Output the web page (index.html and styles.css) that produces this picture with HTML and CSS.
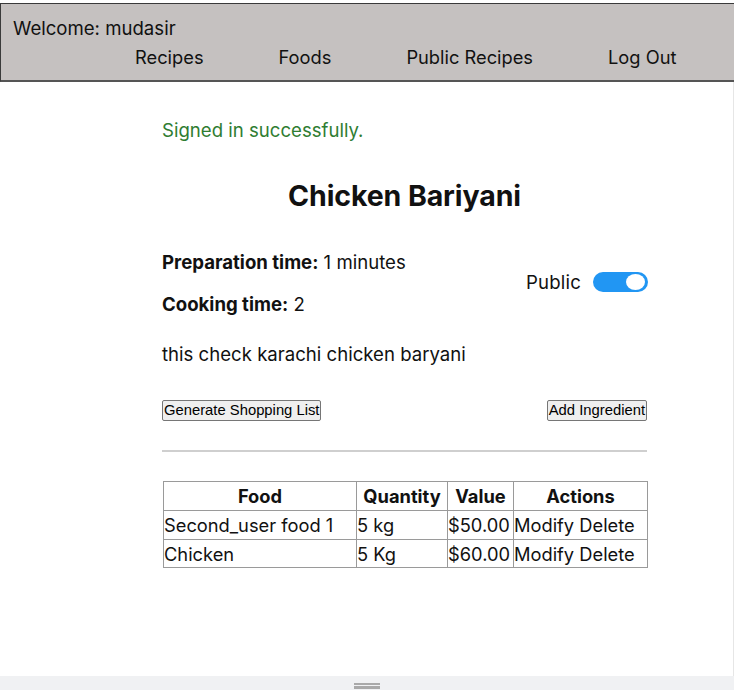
FILE: index.html
```html
<!DOCTYPE html>
<html lang="en">
<head>
<meta charset="utf-8">
<title>Chicken Bariyani</title>
<link rel="stylesheet" href="styles.css">
</head>
<body>
<div class="page">
  <header class="topbar">
    <div class="welcome">Welcome: mudasir</div>
    <nav class="nav">
      <a href="#">Recipes</a>
      <a href="#">Foods</a>
      <a href="#">Public Recipes</a>
      <a href="#">Log Out</a>
    </nav>
  </header>
  <main class="content">
    <p class="notice">Signed in successfully.</p>
    <h1 class="title">Chicken Bariyani</h1>
    <section class="details">
      <div class="times">
        <p class="line"><strong>Preparation time:</strong> 1 minutes</p>
        <p class="line cook"><strong>Cooking time:</strong> 2</p>
      </div>
      <label class="public">
        <span>Public</span>
        <span class="switch"><span class="knob"></span></span>
      </label>
    </section>
    <p class="desc">this check karachi chicken baryani</p>
    <div class="actions">
      <button type="button">Generate Shopping List</button>
      <button type="button">Add Ingredient</button>
    </div>
    <hr class="rule">
    <table class="foods">
      <colgroup>
        <col class="c1"><col class="c2"><col class="c3"><col class="c4">
      </colgroup>
      <thead>
        <tr><th>Food</th><th>Quantity</th><th>Value</th><th>Actions</th></tr>
      </thead>
      <tbody>
        <tr><td>Second_user food 1</td><td>5 kg</td><td>$50.00</td><td>Modify Delete</td></tr>
        <tr><td>Chicken</td><td>5 Kg</td><td>$60.00</td><td>Modify Delete</td></tr>
      </tbody>
    </table>
  </main>
  <footer class="strip"><span class="handle"></span></footer>
</div>
</body>
</html>
```
FILE: styles.css
```css
* { box-sizing: border-box; }
html, body { margin: 0; padding: 0; }
body {
  font-family: "Inter", "Open Sans", sans-serif;
  font-size: 18.6px;
  color: #111;
  background: #fff;
}
.page {
  height: 690px;
  display: flex;
  flex-direction: column;
  overflow: hidden;
}
.topbar {
  margin-top: 3px;
  background: #c5c1c0;
  border-top: 1px solid #3a3a3a;
  border-left: 1px solid #3a3a3a;
  border-bottom: 2px solid #555;
  padding: 12px 0 11px 12px;
  line-height: 24px;
}
.welcome { height: 24px; }
.nav {
  margin-top: 5px;
  padding-left: 122px;
  display: flex;
  gap: 75px;
  font-size: 18.3px;
}
.nav a { color: #111; text-decoration: none; }

.content {
  flex: 1;
  padding-left: 162px;
  border-right: 1px solid #e6e6e6;
}
.content > * { width: 485px; }
.notice {
  margin: 36px 0 0;
  line-height: 24px;
  color: #2f7d32;
}
.title {
  margin: 37px 0 0;
  font-size: 28.5px;
  line-height: 34px;
  font-weight: 700;
  text-align: center;
  letter-spacing: -0.1px;
}
.details {
  margin-top: 37px;
  display: flex;
  justify-content: space-between;
  align-items: center;
}
.line { margin: 0; line-height: 24px; }
.cook { margin-top: 18px; }
.public {
  display: flex;
  align-items: center;
  gap: 12px;
  margin-right: -1px;
  margin-bottom: 2px;
}
.public span:first-child { letter-spacing: 0.2px; }
.switch {
  position: relative;
  width: 55px;
  height: 20px;
  border-radius: 10px;
  background: #2196f3;
}
.knob {
  position: absolute;
  right: 3px;
  top: 2px;
  width: 19px;
  height: 16px;
  border-radius: 50%;
  background: #fff;
}
.desc { margin: 26px 0 0; line-height: 24px; }
.actions {
  margin-top: 34px;
  display: flex;
  justify-content: space-between;
}
.actions button {
  font-family: "Liberation Sans", Arial, sans-serif;
  font-size: 14.8px;
  height: 21px;
  padding: 0 1px;
  line-height: 17px;
  color: #000;
  background: #efefef;
  border: 1px solid #767676;
  border-radius: 2px;
}
.rule {
  margin: 29px 0 0;
  height: 0;
  border: 0;
  border-top: 2px solid #cfcfcf;
}
.foods {
  margin-top: 29px;
  margin-left: 1px;
  width: 484px;
  border-collapse: collapse;
  table-layout: fixed;
  font-size: 18.3px;
}
.c1 { width: 193px; }
.c2 { width: 91px; }
.c3 { width: 66px; }
.c4 { width: 134px; }
.foods th, .foods td {
  border: 1px solid #9a9a9a;
  padding: 0;
  height: 29px;
  line-height: 26px;
  white-space: nowrap;
  overflow: hidden;
}
.foods th { font-weight: 700; text-align: center; }
.foods td { text-align: left; }
.foods tbody tr:last-child td { height: 28px; }
.strip {
  height: 14px;
  background: #f0f1f3;
  position: relative;
}
.handle {
  position: absolute;
  left: 354px;
  top: 7px;
  width: 26px;
  height: 6px;
  border-top: 2px solid #a9a9a9;
  border-bottom: 3px solid #a9a9a9;
}
```
